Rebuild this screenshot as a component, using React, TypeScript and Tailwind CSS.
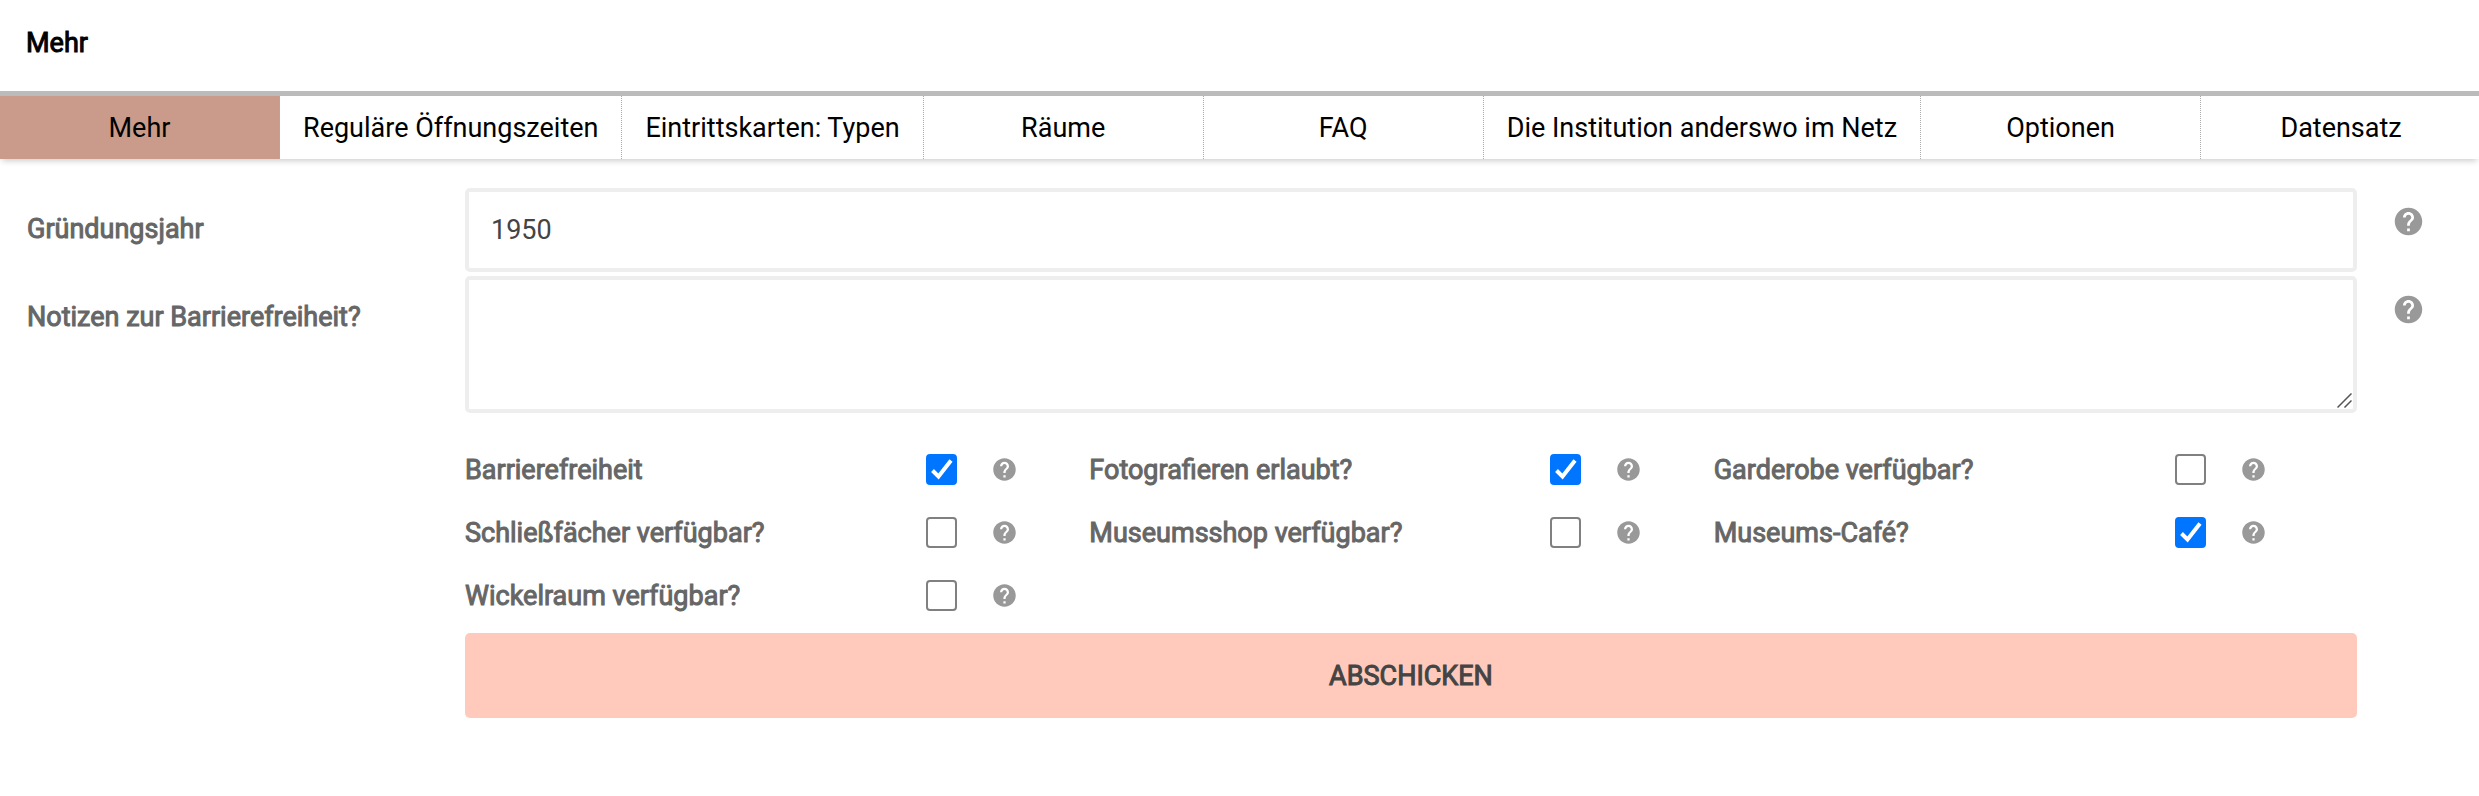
const tabs = [
  'Mehr',
  'Reguläre Öffnungszeiten',
  'Eintrittskarten: Typen',
  'Räume',
  'FAQ',
  'Die Institution anderswo im Netz',
  'Optionen',
  'Datensatz',
];

const options = [
  { id: 'barrierefreiheit', label: 'Barrierefreiheit', checked: true },
  { id: 'fotografieren', label: 'Fotografieren erlaubt?', checked: true },
  { id: 'garderobe', label: 'Garderobe verfügbar?', checked: false },
  { id: 'schliessfaecher', label: 'Schließfächer verfügbar?', checked: false },
  { id: 'museumsshop', label: 'Museumsshop verfügbar?', checked: false },
  { id: 'cafe', label: 'Museums-Café?', checked: true },
  { id: 'wickelraum', label: 'Wickelraum verfügbar?', checked: false },
];

function HelpIcon({ className }: { className: string }) {
  return (
    <svg viewBox="0 0 24 24" fill="currentColor" aria-hidden="true" className={`shrink-0 text-[#999999] ${className}`}>
      <path d="M12 2C6.48 2 2 6.48 2 12s4.480 10 10 10 10-4.480 10-10S17.520 2 12 2zm1 17h-2v-2h2v2zm2.070-7.750l-.9.920C13.450 12.900 13 13.500 13 15h-2v-.5c0-1.100.450-2.100 1.170-2.830l1.240-1.260c.370-.360.590-.860.590-1.410 0-1.100-.9-2-2-2s-2 .9-2 2H8c0-2.210 1.790-4 4-4s4 1.790 4 4c0 .880-.360 1.680-.930 2.250z" />
    </svg>
  );
}

function Checkbox({ id, checked }: { id: string; checked: boolean }) {
  return (
    <span className="relative size-[31px] shrink-0">
      <input
        id={id}
        type="checkbox"
        defaultChecked={checked}
        className="peer block size-full appearance-none rounded-[4px] border-2 border-[#808080] bg-white checked:border-[#0075ff] checked:bg-[#0075ff]"
      />
      <svg
        viewBox="0 0 31 31"
        fill="none"
        stroke="white"
        strokeWidth="4"
        aria-hidden="true"
        className="pointer-events-none absolute inset-0 hidden size-full peer-checked:block"
      >
        <path d="M6.500 16.500 12.500 22.500 25 6.500" />
      </svg>
    </span>
  );
}

const strong = '[-webkit-text-stroke:1px_currentColor]';

export default function App() {
  return (
    <div className="overflow-x-hidden bg-white pb-16 font-[Roboto,sans-serif] text-[27px] leading-8 text-[#666666]">
      <header className="border-b-[5px] border-[#bbbbbb] px-[26px] pt-[27px] pb-8">
        <h1 className={`text-black ${strong}`}>Mehr</h1>
      </header>

      <nav className="flex shadow-[0_4px_6px_-2px_rgba(0,0,0,0.2)]">
        {tabs.map((tab, i) => (
          <a
            key={tab}
            href="#"
            className={`flex h-[63px] min-w-[280px] shrink-0 grow items-center justify-center border-r border-dotted border-[#aaaaaa] px-[23px] whitespace-nowrap text-black last:border-r-0 ${
              i === 0 ? 'bg-[#ca9b8b]' : 'bg-white'
            }`}
          >
            {tab}
          </a>
        ))}
      </nav>

      <form className="grid grid-cols-[438px_1fr_122px] gap-y-1 pt-[29px] pl-[27px]">
        <label htmlFor="jahr" className={`pt-[25px] ${strong}`}>
          Gründungsjahr
        </label>
        <input
          id="jahr"
          type="text"
          defaultValue="1950"
          className="h-[84px] w-full rounded-[5px] border-4 border-[#eeeeee] px-[22px] text-[#444444] outline-none"
        />
        <HelpIcon className="mt-[17px] ml-[35px] size-[33px]" />

        <label htmlFor="notizen" className={`pt-[25px] ${strong}`}>
          Notizen zur Barrierefreiheit?
        </label>
        <div className="relative">
          <textarea
            id="notizen"
            className="block h-[137px] w-full resize-none rounded-[5px] border-4 border-[#eeeeee] px-[22px] py-5 text-[#444444] outline-none"
          />
          <svg
            viewBox="0 0 15 15"
            fill="none"
            stroke="#555555"
            strokeWidth="1.5"
            aria-hidden="true"
            className="pointer-events-none absolute right-[5px] bottom-[5px] size-[15px]"
          >
            <path d="M0.500 14.500 14.500 0.500M7.500 14.500 14.500 7.500" />
          </svg>
        </div>
        <HelpIcon className="mt-[17px] ml-[35px] size-[33px]" />

        <div className="col-start-2 mt-[21px] mb-[2px] grid grid-cols-[33%_33%_33%]">
          {options.map((o) => (
            <div key={o.id} className="flex h-[63px] items-center">
              <label htmlFor={o.id} className={`w-[461px] ${strong}`}>
                {o.label}
              </label>
              <Checkbox id={o.id} checked={o.checked} />
              <HelpIcon className="ml-[34px] size-[27px]" />
            </div>
          ))}
        </div>

        <button
          type="submit"
          className={`col-start-2 h-[85px] rounded-[5px] bg-[#ffcabb] text-[#444444] uppercase ${strong}`}
        >
          Abschicken
        </button>
      </form>
    </div>
  );
}
